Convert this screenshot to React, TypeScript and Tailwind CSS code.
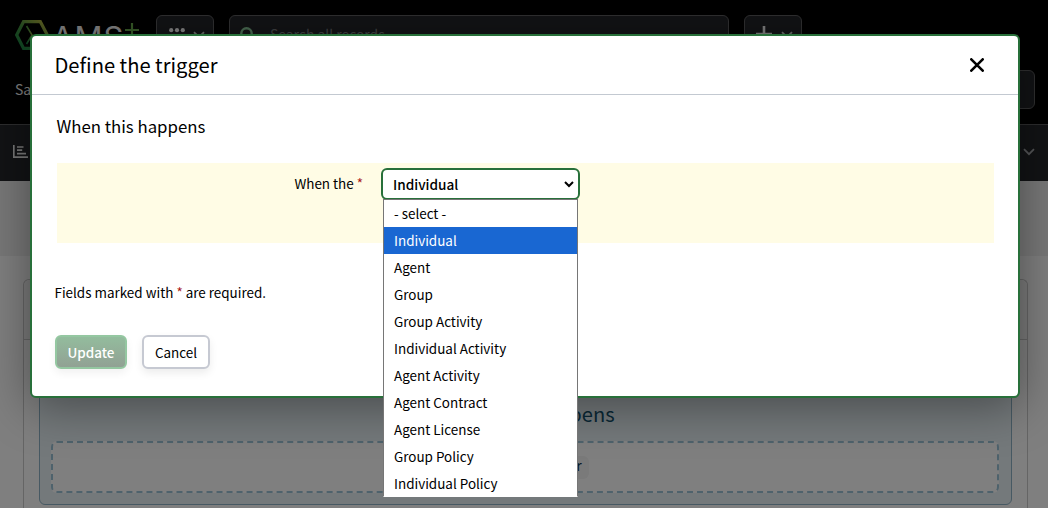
const options = [
  "- select -",
  "Individual",
  "Agent",
  "Group",
  "Group Activity",
  "Individual Activity",
  "Agent Activity",
  "Agent Contract",
  "Agent License",
  "Group Policy",
  "Individual Policy",
];

function Chevron({ className }: { className: string }) {
  return (
    <svg viewBox="0 0 12 8" fill="none" stroke="currentColor" strokeWidth="1.8" className={className}>
      <path d="M1 1.2l5 5 5-5" />
    </svg>
  );
}

function Logo() {
  return (
    <div className="flex items-start">
      <svg viewBox="0 0 34 30" fill="none" className="w-[34px] h-[30px]">
        <defs>
          <linearGradient id="hex" x1="0" y1="1" x2="1" y2="0">
            <stop offset="0" stopColor="#168a48" />
            <stop offset="0.5" stopColor="#4a9440" />
            <stop offset="1" stopColor="#c4bc44" />
          </linearGradient>
        </defs>
        <path d="M8.5 1.7h16.8L32.3 15l-7 13.3H8.5L1.7 15z" stroke="url(#hex)" strokeWidth="3.2" />
        <path d="M11.5 6l5.5 9-5.5 9" stroke="url(#hex)" strokeWidth="1.6" />
      </svg>
      <span className="ml-[3px] mt-[3px] w-[73px] font-['Inter'] text-[31px] leading-[30px] tracking-[1px] font-normal text-white">AMS</span>
      <svg viewBox="0 0 14 14" stroke="#6cb04e" strokeWidth="2.2" className="w-3.5 h-3.5 mt-[3px]">
        <path d="M7 0v14M0 7h14" />
      </svg>
    </div>
  );
}

function TopBar() {
  return (
    <header className="h-[124px] bg-black">
      <div className="flex pt-[15px] pl-[15px] h-[70px]">
        <div className="w-[141px] pt-[5px]">
          <Logo />
        </div>
        <div className="w-[58px] h-10 rounded-md border border-[#5e5e60] bg-[#24262a] flex pl-3 pt-3">
          <svg viewBox="0 0 16 16" fill="#ffffff" className="w-4 h-4">
            {[2.2, 8, 13.8].map((y) => [2.2, 8, 13.8].map((x) => <circle key={`${x}-${y}`} cx={x} cy={y} r="2.1" />))}
          </svg>
          <Chevron className="w-3 h-2 mt-[3px] ml-2 text-[#d0d0d0]" />
        </div>
        <div className="ml-[15px] w-[500px] h-10 rounded-md border border-[#5e5e60] bg-[#24262a] flex pl-2.5 pt-[11px]">
          <svg viewBox="0 0 18 18" fill="none" stroke="#8fcf9f" strokeWidth="2.4" className="w-[18px] h-[18px]">
            <circle cx="6.5" cy="6.5" r="5.2" />
            <path d="M10.5 10.5l6 6" />
          </svg>
          <span className="ml-3 -mt-[3px] text-[13.9px] leading-5 text-[#7c7d80]">Search all records</span>
        </div>
        <div className="ml-[15px] w-[58px] h-10 rounded-md border border-[#5e5e60] bg-[#24262a] flex pl-[11px] pt-[10px]">
          <svg viewBox="0 0 16 16" stroke="#f4f4f4" strokeWidth="2.6" className="w-4 h-4">
            <path d="M8 0v16M0 8h16" />
          </svg>
          <Chevron className="w-3 h-2 mt-[5px] ml-[9px] text-[#d0d0d0]" />
        </div>
      </div>
      <div className="flex justify-between pl-[15px] pr-[13px]">
        <span className="mt-[9px] text-sm leading-5 text-white">Sales</span>
        <div className="w-[120px] h-[39px] rounded-md border border-[#5e5e60] bg-[#24262a]" />
      </div>
    </header>
  );
}

function Page() {
  return (
    <div>
      <TopBar />
      <nav className="h-[57px] border-t border-[#5a5a5c] bg-[#24262a] flex justify-between pl-[13px] pr-[13px] pt-5">
        <svg viewBox="0 0 15 13" fill="none" stroke="#eeeeee" strokeWidth="1.7" className="w-[15px] h-[13px]">
          <path d="M.8 0v12.1H15M4 2h6.5M4 5.2h5.2M4 8.6h9" />
        </svg>
        <Chevron className="w-3 h-2 mt-[3px] text-[#a8aaae]" />
      </nav>
      <div className="h-[75px] bg-[#f0f0f0]" />
      <div className="mt-[23px] ml-[23px] w-[1005px] h-[260px] rounded-t-md border border-b-0 border-[#cacaca] bg-white">
        <div className="h-[60px] border-b border-[#cacaca] bg-[#f6f6f6] rounded-t-md" />
        <div className="ml-[15px] mt-2 w-[973px] h-[157px] rounded-md border border-[#8fb3c6] bg-[#e9f2f7] text-center">
          <h2 className="pt-[51px] text-[20.1px] leading-[28px] text-[#13506d]">When this happens</h2>
          <div className="mt-[13px] ml-[11px] w-[948px] h-[52px] rounded-md border-2 border-dashed border-[#9dc4d8] bg-white flex justify-center items-center">
            <span className="rounded-md bg-[#f4f4f4] px-[7px] h-[23px] text-sm leading-[18px] text-[#0c3345]">Define the trigger</span>
          </div>
        </div>
      </div>
    </div>
  );
}

function TriggerModal() {
  return (
    <section className="absolute left-[30px] top-[34px] w-[990px] h-[364px] rounded-md border-2 border-[#28703a] bg-white shadow-[0_8px_48px_rgba(0,0,0,0.4)] text-black">
      <div className="h-[59px] border-b border-[#c3c9d1] flex justify-between items-center pl-[22.5px] pr-[34px]">
        <h1 className="text-[20.16px] leading-7">Define the trigger</h1>
        <svg viewBox="0 0 14 14" fill="none" stroke="currentColor" strokeWidth="2.6" strokeLinecap="round" className="w-3.5 h-3.5">
          <path d="M1.3 1.3l11.4 11.4M12.7 1.3L1.3 12.7" />
        </svg>
      </div>
      <h2 className="mt-[19px] ml-[24.5px] text-[16.8px] leading-6">When this happens</h2>
      <div className="mt-[25px] ml-[25px] w-[937px] h-20 bg-[#fffce5] flex">
        <label className="w-[306px] mt-2.5 text-right text-[13.44px] leading-5">
          When the <span className="text-[#a81616]">*</span>
        </label>
        <div className="relative ml-[18px] mt-[5px] w-[199px] h-8">
          <div className="h-8 rounded-md border-2 border-[#28703a] bg-white flex justify-between items-center pl-2.5 pr-1">
            <span className="text-[13.6px] leading-5 font-medium -mt-px">Individual</span>
            <svg viewBox="0 0 10 7" fill="none" stroke="currentColor" strokeWidth="2" className="w-2.5 h-[7px]">
              <path d="M1 1l4 4 4-4" />
            </svg>
          </div>
          <ul className="absolute left-[2px] top-[31px] w-[195px] h-[298px] border border-[#767676] border-b-white bg-white text-[13.44px]">
            {options.map((o) => (
              <li
                key={o}
                className={`h-[27px] pl-2.5 leading-[27px] ${o === "Individual" ? "bg-[#1967d2] text-white" : ""}`}
              >
                {o}
              </li>
            ))}
          </ul>
        </div>
      </div>
      <p className="mt-[39px] ml-[22.5px] text-[13.44px] leading-5">
        Fields marked with <span className="text-[#a81616]">*</span> are required.
      </p>
      <div className="mt-[33px] ml-[23px] flex gap-[15px] text-[13.44px]">
        <button className="w-[72px] h-[34px] rounded-md border-2 border-[#94c7a1] bg-linear-to-b from-[#93bc9d] to-[#91a194] text-white font-medium shadow-[0_4px_8px_rgba(0,0,0,0.06)]">
          Update
        </button>
        <button className="w-[68px] h-[34px] rounded-md border-2 border-[#c6c9d2] bg-white shadow-[0_4px_8px_rgba(0,0,0,0.08)]">
          Cancel
        </button>
      </div>
    </section>
  );
}

export default function App() {
  return (
    <div className="relative w-[1048px] h-[508px] overflow-hidden bg-white font-['Noto_Sans_CJK_SC','Noto_Sans',sans-serif]">
      <Page />
      <div className="absolute inset-0 bg-black/50" />
      <TriggerModal />
    </div>
  );
}
